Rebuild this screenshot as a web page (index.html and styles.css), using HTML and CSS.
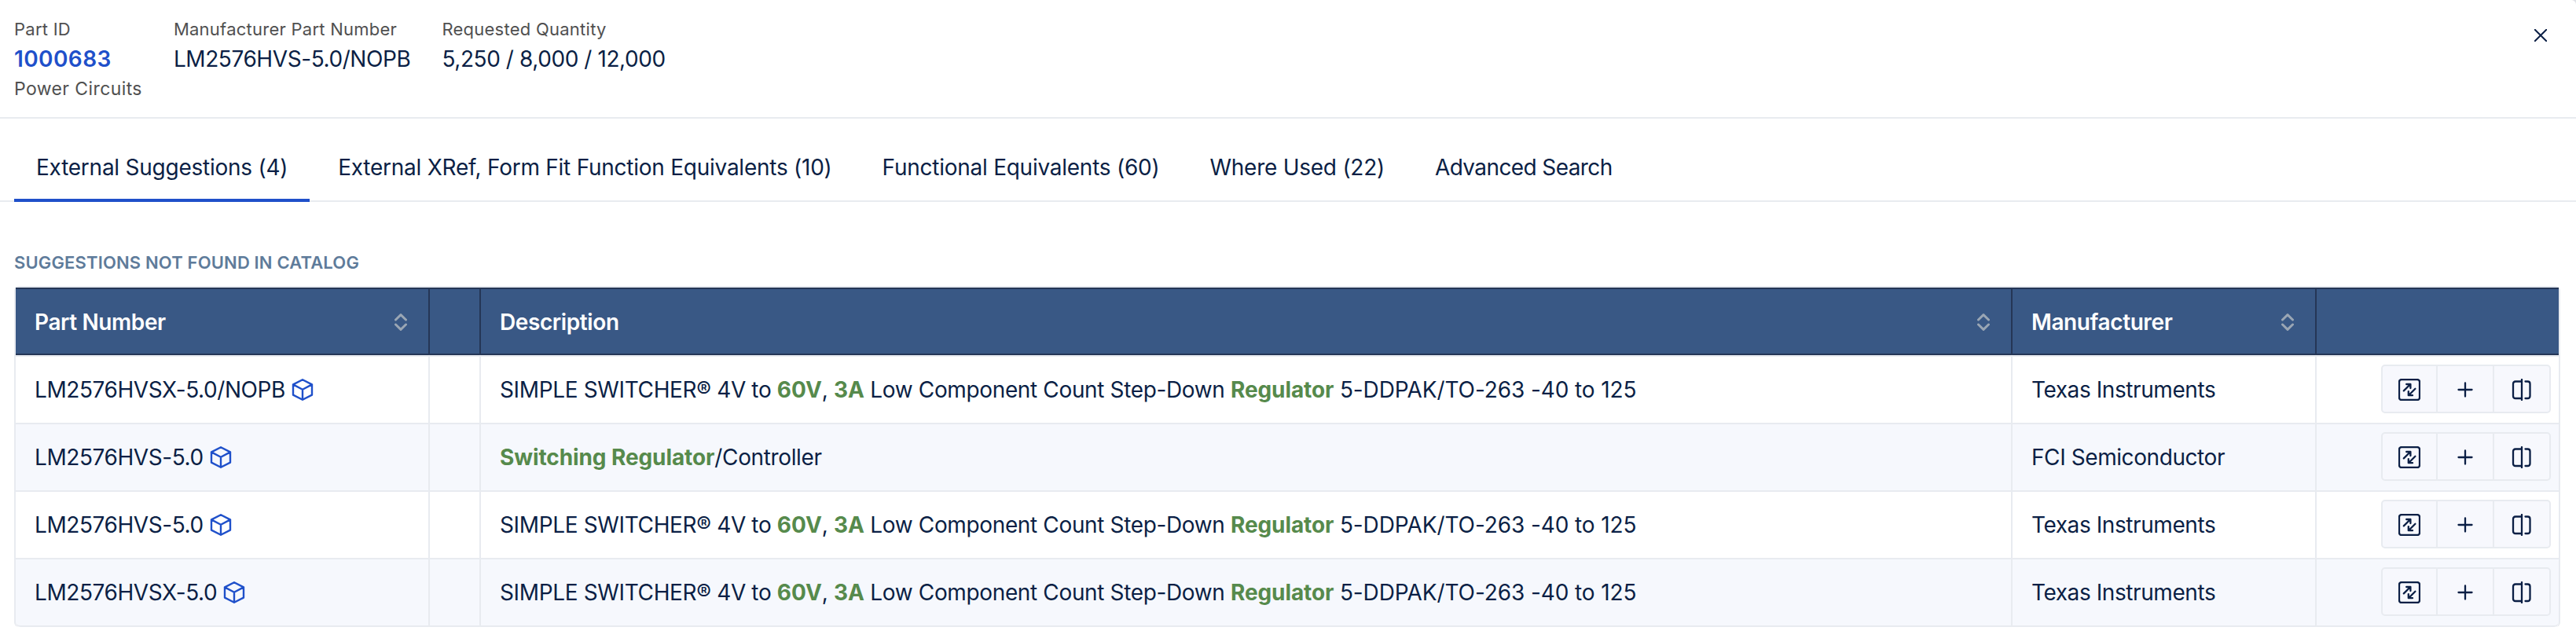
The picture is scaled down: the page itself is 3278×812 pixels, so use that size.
FILE: index.html
```html
<!DOCTYPE html>
<html lang="en">
<head>
  <meta charset="UTF-8">
  <meta name="viewport" content="width=device-width, initial-scale=1.0">
  <title>Part Suggestions</title>
  <link rel="stylesheet" href="styles.css">
</head>
<body>
  <svg class="sprite" aria-hidden="true">
    <symbol id="cube" viewBox="0 0 28 28">
      <path d="M14 1.2 L26 7.4 V20.6 L14 26.8 L2 20.6 V7.4 Z M2 7.4 L14 13.8 L26 7.4 M14 13.8 V26.8" />
    </symbol>
    <symbol id="sort" viewBox="0 0 16 22">
      <path d="M1.5 8 L8 1.7 L14.5 8 M1.5 14 L8 20.3 L14.5 14" />
    </symbol>
    <symbol id="swap" viewBox="0 0 28 28">
      <rect x="1" y="1" width="26" height="26" rx="3" />
      <path d="M6.8 15.4 L15 7.2 M10.2 7 H15.4 V12 M21.4 12.8 L13.2 21 M12.8 16.2 V21.2 H18" />
    </symbol>
    <symbol id="plus" viewBox="0 0 28 28">
      <path d="M14 5.5 V22.5 M5.5 14 H22.5" />
    </symbol>
    <symbol id="compare" viewBox="0 0 28 28">
      <path d="M14 1 V27 M14 3.5 H6 Q3 3.5 3 6.5 V22 Q3 25 6 25 H14 M18.5 3.5 H21.5 Q24.5 3.5 24.5 6.5 V22 Q24.5 25 21.5 25 H18.5" />
    </symbol>
    <symbol id="close" viewBox="0 0 16 16">
      <path d="M.7 .7 L15.3 15.3 M15.3 .7 L.7 15.3" />
    </symbol>
  </svg>

  <div class="modal">
    <header class="part-header">
      <div class="part-field">
        <span class="label">Part ID</span>
        <a class="value part-link">1000683</a>
        <span class="label category">Power Circuits</span>
      </div>
      <div class="part-field">
        <span class="label">Manufacturer Part Number</span>
        <span class="value">LM2576HVS-5.0/NOPB</span>
      </div>
      <div class="part-field">
        <span class="label">Requested Quantity</span>
        <span class="value">5,250 / 8,000 / 12,000</span>
      </div>
      <button class="close" aria-label="Close"><svg><use href="#close" /></svg></button>
    </header>

    <nav class="tabs">
      <a class="tab active">External Suggestions (4)</a>
      <a class="tab">External XRef, Form Fit Function Equivalents (10)</a>
      <a class="tab">Functional Equivalents (60)</a>
      <a class="tab">Where Used (22)</a>
      <a class="tab tab-search">Advanced Search</a>
    </nav>

    <main class="content">
      <h2 class="section-title">SUGGESTIONS NOT FOUND IN CATALOG</h2>
      <table class="parts">
        <colgroup>
          <col class="col-part">
          <col class="col-flag">
          <col>
          <col class="col-mfr">
          <col class="col-actions">
        </colgroup>
        <thead>
          <tr>
            <th><div class="th">Part Number <svg class="sort"><use href="#sort" /></svg></div></th>
            <th></th>
            <th><div class="th">Description <svg class="sort"><use href="#sort" /></svg></div></th>
            <th><div class="th">Manufacturer <svg class="sort"><use href="#sort" /></svg></div></th>
            <th></th>
          </tr>
        </thead>
        <tbody>
          <tr>
            <td><div class="part">LM2576HVSX-5.0/NOPB <svg class="cube"><use href="#cube" /></svg></div></td>
            <td></td>
            <td class="desc">SIMPLE SWITCHER® 4V to <b>60V</b>, <b>3A</b> Low Component Count Step-Down <b>Regulator</b> <span class="spec">5-DDPAK/TO-263 -40 to 125</span></td>
            <td>Texas Instruments</td>
            <td class="actions">
              <div class="btn-group">
                <button aria-label="Replace"><svg><use href="#swap" /></svg></button>
                <button aria-label="Add"><svg><use href="#plus" /></svg></button>
                <button aria-label="Compare"><svg><use href="#compare" /></svg></button>
              </div>
            </td>
          </tr>
          <tr>
            <td><div class="part">LM2576HVS-5.0 <svg class="cube"><use href="#cube" /></svg></div></td>
            <td></td>
            <td class="desc"><b>Switching Regulator</b>/Controller</td>
            <td>FCI Semiconductor</td>
            <td class="actions">
              <div class="btn-group">
                <button aria-label="Replace"><svg><use href="#swap" /></svg></button>
                <button aria-label="Add"><svg><use href="#plus" /></svg></button>
                <button aria-label="Compare"><svg><use href="#compare" /></svg></button>
              </div>
            </td>
          </tr>
          <tr>
            <td><div class="part">LM2576HVS-5.0 <svg class="cube"><use href="#cube" /></svg></div></td>
            <td></td>
            <td class="desc">SIMPLE SWITCHER® 4V to <b>60V</b>, <b>3A</b> Low Component Count Step-Down <b>Regulator</b> <span class="spec">5-DDPAK/TO-263 -40 to 125</span></td>
            <td>Texas Instruments</td>
            <td class="actions">
              <div class="btn-group">
                <button aria-label="Replace"><svg><use href="#swap" /></svg></button>
                <button aria-label="Add"><svg><use href="#plus" /></svg></button>
                <button aria-label="Compare"><svg><use href="#compare" /></svg></button>
              </div>
            </td>
          </tr>
          <tr>
            <td><div class="part">LM2576HVSX-5.0 <svg class="cube"><use href="#cube" /></svg></div></td>
            <td></td>
            <td class="desc">SIMPLE SWITCHER® 4V to <b>60V</b>, <b>3A</b> Low Component Count Step-Down <b>Regulator</b> <span class="spec">5-DDPAK/TO-263 -40 to 125</span></td>
            <td>Texas Instruments</td>
            <td class="actions">
              <div class="btn-group">
                <button aria-label="Replace"><svg><use href="#swap" /></svg></button>
                <button aria-label="Add"><svg><use href="#plus" /></svg></button>
                <button aria-label="Compare"><svg><use href="#compare" /></svg></button>
              </div>
            </td>
          </tr>
        </tbody>
      </table>
    </main>
  </div>
</body>
</html>
```
FILE: styles.css
```css
:root {
  --ink: #0b1f45;
  --blue: #1f50ca;
  --border: #e8ebf0;
  --head: #395885;
  --head-border: #253656;
  --stripe: #f6f8fd;
  --green: #568a4c;
}

* {
  box-sizing: border-box;
}

body {
  margin: 0;
  background: #dfe1e6;
  color: var(--ink);
  font: 28px/40px "Inter", sans-serif;
}

svg {
  display: block;
  fill: none;
  stroke: currentColor;
  stroke-width: 2;
  stroke-linecap: round;
  stroke-linejoin: round;
}

.sprite {
  position: absolute;
  width: 0;
  height: 0;
}

.modal {
  height: 812px;
  background: #fff;
  border-top-right-radius: 6px;
}

.part-header {
  display: flex;
  gap: 40px;
  height: 151px;
  padding: 22px 18px 0;
  border-bottom: 2px solid var(--border);
}

.part-field {
  display: flex;
  flex-direction: column;
  gap: 3px;
}

.label {
  font-size: 22px;
  line-height: 30px;
  letter-spacing: 0.25px;
  color: #505050;
}

.label.category {
  font-size: 23px;
  letter-spacing: 0.4px;
}

.value {
  letter-spacing: -0.42px;
}

.part-link {
  color: var(--blue);
  font-weight: 600;
  letter-spacing: 0.4px;
}

.close {
  width: 16px;
  height: 16px;
  margin: 15px 19px 0 auto;
  padding: 0;
  border: 0;
  background: none;
  color: var(--ink);
}

.close svg {
  width: 16px;
  height: 16px;
}

.tabs {
  display: flex;
  gap: 8px;
  padding: 22px 18px 0;
  border-bottom: 2px solid var(--border);
}

.tab {
  height: 84px;
  margin-bottom: -2px;
  padding: 20px 28px 0;
  border-bottom: 4px solid transparent;
  letter-spacing: -0.25px;
}

.tab.active {
  border-color: var(--blue);
}

.tab-search {
  letter-spacing: -0.6px;
}

.content {
  padding: 62px 20px 0 18px;
}

.section-title {
  margin: 0 0 15px;
  color: #5e7b9a;
  font-size: 22px;
  font-weight: 600;
  line-height: 30px;
  letter-spacing: 0.15px;
}

.parts {
  width: 100%;
  table-layout: fixed;
  border: 2px solid var(--border);
  border-bottom: 0;
  border-radius: 6px;
  border-spacing: 0;
}

.col-part {
  width: 527px;
}

.col-flag {
  width: 65px;
}

.col-mfr {
  width: 387px;
}

.col-actions {
  width: 308px;
}

.parts th {
  height: 86px;
  padding: 2px 27px 0 24px;
  background: var(--head);
  border-top: 2px solid var(--head-border);
  border-bottom: 2px solid var(--head-border);
  border-right: 2px solid var(--head-border);
  color: #fff;
  font-weight: 600;
  letter-spacing: -0.4px;
  text-align: left;
}

.parts th:last-child,
.parts td:last-child {
  border-right: 0;
}

.th {
  display: flex;
  align-items: center;
  justify-content: space-between;
}

.sort {
  width: 16px;
  height: 22px;
  color: #9aa6b4;
  stroke-width: 3;
}

.parts td {
  height: 86px;
  padding: 0 24px;
  border-right: 2px solid var(--border);
  border-bottom: 2px solid var(--border);
  letter-spacing: -0.42px;
  white-space: nowrap;
}

.parts tbody tr:first-child td {
  height: 88px;
  border-top: 2px solid var(--border);
}

.parts tr:nth-child(even) td {
  background: var(--stripe);
}

.parts tr:last-child td:first-child {
  border-bottom-left-radius: 6px;
}

.parts tr:last-child td:last-child {
  border-bottom-right-radius: 6px;
}

.parts td.desc {
  letter-spacing: -0.36px;
}

.desc b {
  color: var(--green);
  font-weight: 700;
  letter-spacing: -0.1px;
}

.desc .spec {
  letter-spacing: -0.1px;
}

.part {
  display: flex;
  align-items: center;
  gap: 8px;
}

.cube {
  width: 28px;
  height: 28px;
  color: var(--blue);
  stroke-width: 2.4;
}

.parts td.actions {
  padding: 0 10px 2px;
}

.btn-group {
  display: flex;
  width: 216px;
  height: 62px;
  margin-left: auto;
  border: 2px solid var(--border);
  border-radius: 5px;
  background: #f7f8fd;
}

.btn-group button {
  display: flex;
  align-items: center;
  justify-content: center;
  width: 70px;
  padding: 2px 0 0;
  border: 0;
  border-right: 2px solid var(--border);
  background: none;
  color: var(--ink);
}

.btn-group button:nth-child(2) {
  width: 72px;
}

.btn-group button:last-child {
  border-right: 0;
}

.btn-group svg {
  width: 28px;
  height: 28px;
  stroke-width: 2.3;
}
```
